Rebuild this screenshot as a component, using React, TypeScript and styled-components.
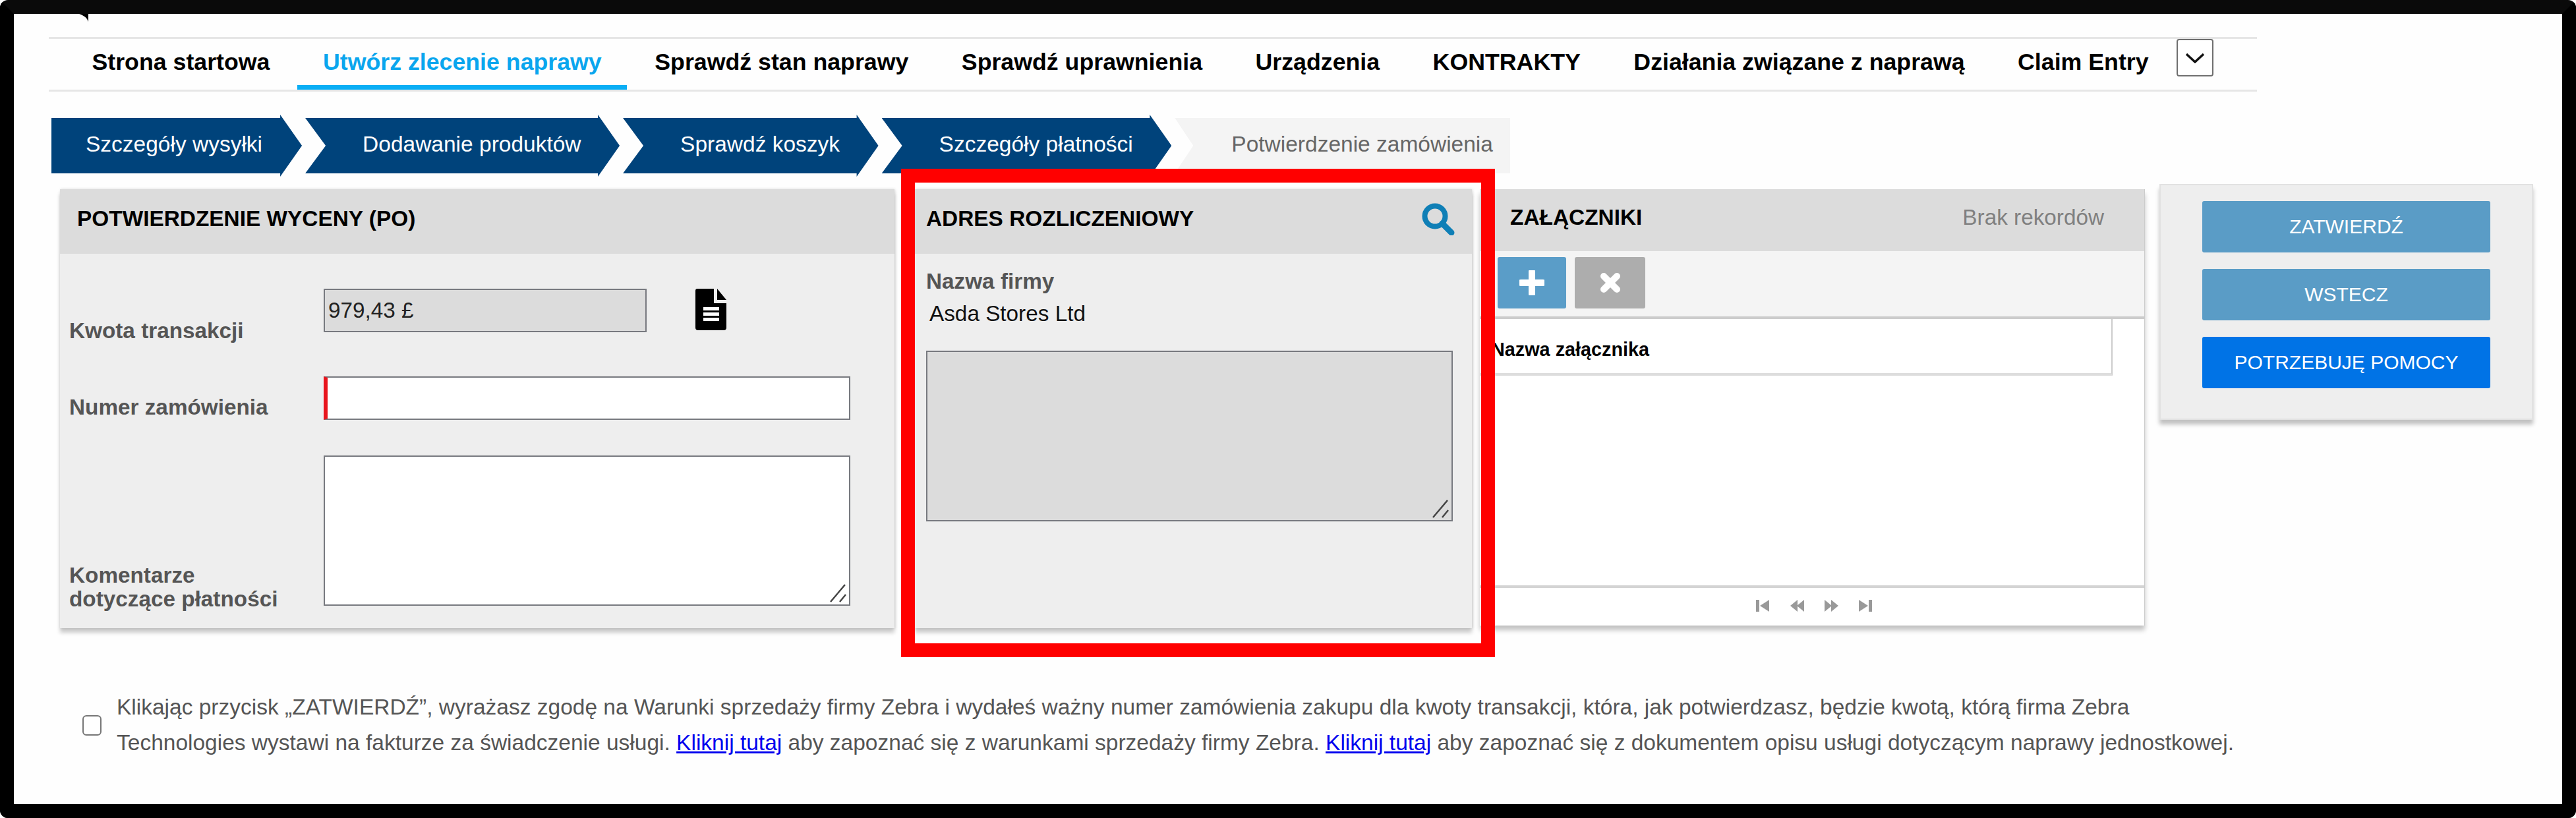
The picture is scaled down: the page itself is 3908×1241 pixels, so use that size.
import React, { FunctionComponent } from "react";
import styled, { createGlobalStyle } from "styled-components";

const GlobalStyle = createGlobalStyle`
  html, body {
    margin: 0;
    padding: 0;
    background: #fff;
  }
  #root {
    width: 3908px;
    height: 1241px;
  }
  * {
    box-sizing: border-box;
  }
`;

const Frame = styled.div`
  position: relative;
  width: 3908px;
  height: 1241px;
  border: 21px solid #000;
  border-top-color: #0a0a0a;
  border-radius: 12px;
  background: #fefefe;
  font-family: "Liberation Sans", Arial, sans-serif;
  font-size: 33.3px;
  overflow: hidden;
`;

const CornerMark = styled.svg`
  position: absolute;
  left: 99px;
  top: 0;
`;

const Nav = styled.nav`
  display: flex;
  align-items: flex-start;
  gap: 3.5px;
  width: 3350px;
  height: 83px;
  margin: 35px 0 0 53px;
  padding-left: 27px;
  border-top: 3px solid #e6e6e6;
  border-bottom: 3px solid #e6e6e6;
`;

const NavItem = styled.a<{ $active?: boolean }>`
  height: 77px;
  padding: 0 38.5px;
  border-bottom: 7px solid ${(p) => (p.$active ? "#0aaef5" : "transparent")};
  color: ${(p) => (p.$active ? "#0aa6ee" : "#000")};
  font-size: 35.72px;
  font-weight: bold;
  line-height: 70px;
  white-space: nowrap;
`;

const NavMore = styled.button`
  display: flex;
  align-items: center;
  justify-content: center;
  width: 56px;
  height: 57px;
  padding: 0;
  background: #fff;
  border: 2px solid #6f6f6f;
  border-radius: 4px;
`;

const Steps = styled.div`
  display: flex;
  gap: 5px;
  height: 94px;
  margin: 35px 0 0 57px;
`;

const Step = styled.div<{ $first?: boolean; $last?: boolean }>`
  height: 94px;
  padding: ${(p) => (p.$first ? "0 60px 0 52px" : p.$last ? "0 26px 0 86px" : "0 58.5px 0 87px")};
  background: ${(p) => (p.$last ? "#f4f4f4" : "#00437b")};
  color: ${(p) => (p.$last ? "#666" : "#fff")};
  font-size: 33.5px;
  line-height: 90px;
  white-space: nowrap;
  clip-path: ${(p) =>
    p.$last
      ? "polygon(0 5px, 100% 5px, 100% calc(100% - 5px), 0 calc(100% - 5px), 28px 50%)"
      : p.$first
        ? "polygon(0 5px, calc(100% - 33px) 5px, calc(100% - 33px) 0, 100% 50%, calc(100% - 33px) 100%, calc(100% - 33px) calc(100% - 5px), 0 calc(100% - 5px))"
        : "polygon(0 5px, calc(100% - 33px) 5px, calc(100% - 33px) 0, 100% 50%, calc(100% - 33px) 100%, calc(100% - 33px) calc(100% - 5px), 0 calc(100% - 5px), 31px 50%)"};
`;

const Content = styled.div`
  position: relative;
  display: flex;
  align-items: flex-start;
  margin: 11px 0 0 70px;
`;

const Highlight = styled.div`
  position: absolute;
  left: 1276px;
  top: -23px;
  width: 901px;
  height: 741px;
  border: 21px solid #f00;
  z-index: 2;
`;

const Panel = styled.section<{ $width: number; $gap: number }>`
  flex: none;
  width: ${(p) => p.$width}px;
  margin: 8px ${(p) => p.$gap}px 0 0;
  background: #eee;
  box-shadow: 0 7px 6px rgba(0, 0, 0, 0.2), 1px 0 4px rgba(0, 0, 0, 0.14);
`;

const PanelHeader = styled.header`
  display: flex;
  justify-content: space-between;
  align-items: center;
  height: 98px;
  padding: 0 26px 8px 17px;
  background: #dcdcdc;
`;

const PanelTitle = styled.h2<{ $inset?: number }>`
  margin: 0 0 0 ${(p) => p.$inset ?? 0}px;
  color: #000;
  font-size: 33.4px;
  font-weight: bold;
  white-space: nowrap;
`;

const QuoteBody = styled.div`
  padding: 53px 67px 34px 14px;
`;

const FieldRow = styled.div<{ $height: number }>`
  display: flex;
  height: ${(p) => p.$height}px;
`;

const FieldLabel = styled.label<{ $top: number }>`
  flex: none;
  width: 386px;
  padding-top: ${(p) => p.$top}px;
  color: #555;
  font-weight: bold;
  line-height: 36px;
`;

const TextField = styled.input<{ $required?: boolean; $locked?: boolean; $width: number }>`
  display: block;
  width: ${(p) => p.$width}px;
  height: 66px;
  padding: 0 5px;
  background: ${(p) => (p.$locked ? "#dcdcdc" : "#fff")};
  border: 2px solid #77797f;
  border-left: ${(p) => (p.$required ? "6px solid #e8141c" : "2px solid #77797f")};
  border-radius: 0;
  color: #222;
  font: 33.3px "Liberation Sans", Arial, sans-serif;
  line-height: 60px;
`;

const AreaBox = styled.div<{ $fill: string; $width: number; $height: number }>`
  position: relative;
  width: ${(p) => p.$width}px;
  height: ${(p) => p.$height}px;
  background: ${(p) => p.$fill};
  border: 2px solid #77797f;
`;

const ResizeGrip = styled.svg`
  position: absolute;
  right: 2px;
  bottom: 2px;
`;

const DocIcon = styled.svg`
  flex: none;
  margin-left: 74px;
`;

const AddressBody = styled.div`
  height: 568px;
  padding: 23px 29px 0 17px;
`;

const FieldCaption = styled.div`
  color: #555;
  font-weight: bold;
  line-height: 38px;
`;

const FieldValue = styled.div`
  margin: 11px 0 37px 5px;
  color: #111;
  line-height: 38px;
`;

const AttachPanel = styled.section`
  flex: none;
  display: flex;
  flex-direction: column;
  width: 1009px;
  height: 662px;
  margin: 8px 22px 0 12px;
  background: #fff;
  border-right: 1px solid #ccc;
  box-shadow: 0 7px 7px rgba(0, 0, 0, 0.24);
`;

const AttachHeader = styled.header`
  display: flex;
  justify-content: space-between;
  align-items: center;
  height: 94px;
  padding: 0 61px 8px 46px;
  background: #dcdcdc;
`;

const NoRecords = styled.span`
  color: #808080;
  white-space: nowrap;
`;

const Toolbar = styled.div`
  display: flex;
  gap: 13px;
  height: 103px;
  padding: 9px 0 0 27px;
  background: #f4f4f4;
  border-bottom: 4px solid #ccc;
`;

const ToolButton = styled.button<{ $fill: string; $width: number }>`
  display: flex;
  align-items: center;
  justify-content: center;
  width: ${(p) => p.$width}px;
  height: 78px;
  padding: 0;
  background: ${(p) => p.$fill};
  border: 0;
  border-radius: 3px;
`;

const TableHead = styled.div`
  width: 960px;
  height: 86px;
  padding-left: 17px;
  border-right: 2px solid #ccc;
  border-bottom: 4px solid #ddd;
  color: #000;
  font-size: 28.8px;
  font-weight: bold;
  line-height: 92px;
  white-space: nowrap;
`;

const TableBody = styled.div`
  flex: 1;
`;

const Pager = styled.div`
  display: flex;
  justify-content: center;
  align-items: center;
  gap: 31px;
  height: 61px;
  padding: 0 0 4px 7px;
  border-top: 4px solid #d4d4d4;
`;

const ActionPanel = styled.aside`
  flex: none;
  display: flex;
  flex-direction: column;
  gap: 25px;
  width: 567px;
  height: 358px;
  padding: 24px 63px 0;
  background: #eee;
  border: 2px solid #e2e2e2;
  box-shadow: 0 7px 6px rgba(0, 0, 0, 0.24);
`;

const ActionButton = styled.button<{ $primary?: boolean }>`
  height: 78px;
  padding: 0;
  background: ${(p) => (p.$primary ? "#0073e6" : "#5a9cc6")};
  border: 0;
  border-radius: 3px;
  color: #fff;
  font: 30px "Liberation Sans", Arial, sans-serif;
`;

const Consent = styled.div`
  display: flex;
  align-items: center;
  gap: 23px;
  margin: 93px 0 0 104px;
  color: #555;
  font-size: 33.5px;
  line-height: 54px;
`;

const CheckBox = styled.input`
  flex: none;
  appearance: none;
  width: 29px;
  height: 31px;
  margin: 0;
  background: #fff;
  border: 2px solid #767676;
  border-radius: 6px;
`;

const ConsentText = styled.p`
  margin: 0;
  white-space: nowrap;
`;

const ConsentLink = styled.a`
  color: #0000ee;
  text-decoration: underline;
`;

const navItems = [
  "Strona startowa",
  "Utwórz zlecenie naprawy",
  "Sprawdź stan naprawy",
  "Sprawdź uprawnienia",
  "Urządzenia",
  "KONTRAKTY",
  "Działania związane z naprawą",
  "Claim Entry",
];

const steps = [
  "Szczegóły wysyłki",
  "Dodawanie produktów",
  "Sprawdź koszyk",
  "Szczegóły płatności",
  "Potwierdzenie zamówienia",
];

const Grip: FunctionComponent = () => (
  <ResizeGrip width="30" height="30" viewBox="0 0 30 30">
    <path d="M4 28 L26 2 M18 28 L27 17" stroke="#444" strokeWidth="2.5" fill="none" />
  </ResizeGrip>
);

const pagerShapes = [
  "M0 0h5v18H0z M20 0v18L6 9z",
  "M11 0v18L0 9z M21 0v18L10 9z",
  "M0 0v18l11-9z M10 0v18l11-9z",
  "M0 0v18l14-9z M15 0h5v18h-5z",
];

const App: FunctionComponent = () => {
  return (
    <Frame>
      <GlobalStyle />
      <CornerMark width="14" height="12" viewBox="0 0 14 12">
        <path d="M0 0H14V12Q12 4 0 0Z" fill="#000" />
      </CornerMark>
      <Nav>
        {navItems.map((item, i) => (
          <NavItem key={item} $active={i === 1}>
            {item}
          </NavItem>
        ))}
        <NavMore aria-label="Więcej">
          <svg width="30" height="16" viewBox="0 0 30 16">
            <path d="M2 2 L15 14 L28 2" stroke="#111" strokeWidth="3.5" fill="none" />
          </svg>
        </NavMore>
      </Nav>
      <Steps>
        {steps.map((step, i) => (
          <Step key={step} $first={i === 0} $last={i === steps.length - 1}>
            {step}
          </Step>
        ))}
      </Steps>
      <Content>
        <Panel $width={1266} $gap={31}>
          <PanelHeader>
            <PanelTitle $inset={9}>POTWIERDZENIE WYCENY (PO)</PanelTitle>
          </PanelHeader>
          <QuoteBody>
            <FieldRow $height={133}>
              <FieldLabel $top={46}>Kwota transakcji</FieldLabel>
              <TextField $locked readOnly $width={490} defaultValue="979,43 £" />
              <DocIcon width="47" height="63" viewBox="0 0 47 63">
                <path d="M3 0H28V22H47V59Q47 63 43 63H4Q0 63 0 59V3Q0 0 3 0Z M33 0L47 17H33Z" fill="#000" />
                <path d="M12 28h24v5H12z M12 36h24v5H12z M12 44h24v5H12z" fill="#fff" />
              </DocIcon>
            </FieldRow>
            <FieldRow $height={120}>
              <FieldLabel $top={29}>Numer zamówienia</FieldLabel>
              <TextField $required $width={799} />
            </FieldRow>
            <FieldRow $height={228}>
              <FieldLabel $top={164}>
                Komentarze
                <br />
                dotyczące płatności
              </FieldLabel>
              <AreaBox $fill="#fff" $width={799} $height={228}>
                <Grip />
              </AreaBox>
            </FieldRow>
          </QuoteBody>
        </Panel>
        <Panel $width={845} $gap={0}>
          <PanelHeader>
            <PanelTitle>ADRES ROZLICZENIOWY</PanelTitle>
            <svg width="50" height="49" viewBox="0 0 50 49">
              <circle cx="20" cy="20" r="15.5" stroke="#0f7fb6" strokeWidth="8" fill="none" />
              <path d="M31 31L45 45" stroke="#0f7fb6" strokeWidth="9" strokeLinecap="round" />
            </svg>
          </PanelHeader>
          <AddressBody>
            <FieldCaption>Nazwa firmy</FieldCaption>
            <FieldValue>Asda Stores Ltd</FieldValue>
            <AreaBox $fill="#dcdcdc" $width={799} $height={259}>
              <Grip />
            </AreaBox>
          </AddressBody>
        </Panel>
        <AttachPanel>
          <AttachHeader>
            <PanelTitle>ZAŁĄCZNIKI</PanelTitle>
            <NoRecords>Brak rekordów</NoRecords>
          </AttachHeader>
          <Toolbar>
            <ToolButton $fill="#5a9dc8" $width={104}>
              <svg width="38" height="38" viewBox="0 0 38 38">
                <path d="M19 2V36 M2 19H36" stroke="#fff" strokeWidth="10" strokeLinecap="round" />
              </svg>
            </ToolButton>
            <ToolButton $fill="#adadad" $width={107}>
              <svg width="32" height="32" viewBox="0 0 32 32">
                <path d="M6 6L26 26 M26 6L6 26" stroke="#fff" strokeWidth="10" strokeLinecap="round" />
              </svg>
            </ToolButton>
          </Toolbar>
          <TableHead>Nazwa załącznika</TableHead>
          <TableBody />
          <Pager>
            {pagerShapes.map((d) => (
              <svg key={d} width="21" height="18" viewBox="0 0 21 18">
                <path d={d} fill="#999" />
              </svg>
            ))}
          </Pager>
        </AttachPanel>
        <ActionPanel>
          <ActionButton>ZATWIERDŹ</ActionButton>
          <ActionButton>WSTECZ</ActionButton>
          <ActionButton $primary>POTRZEBUJĘ POMOCY</ActionButton>
        </ActionPanel>
        <Highlight />
      </Content>
      <Consent>
        <CheckBox type="checkbox" />
        <ConsentText>
          Klikając przycisk „ZATWIERDŹ”, wyrażasz zgodę na Warunki sprzedaży firmy Zebra i wydałeś ważny numer zamówienia zakupu dla kwoty transakcji, która, jak potwierdzasz, będzie kwotą, którą firma Zebra
          <br />
          Technologies wystawi na fakturze za świadczenie usługi. <ConsentLink>Kliknij tutaj</ConsentLink> aby zapoznać się z warunkami sprzedaży firmy Zebra. <ConsentLink>Kliknij tutaj</ConsentLink> aby zapoznać się z dokumentem opisu usługi dotyczącym naprawy jednostkowej.
        </ConsentText>
      </Consent>
    </Frame>
  );
};

export default App;
